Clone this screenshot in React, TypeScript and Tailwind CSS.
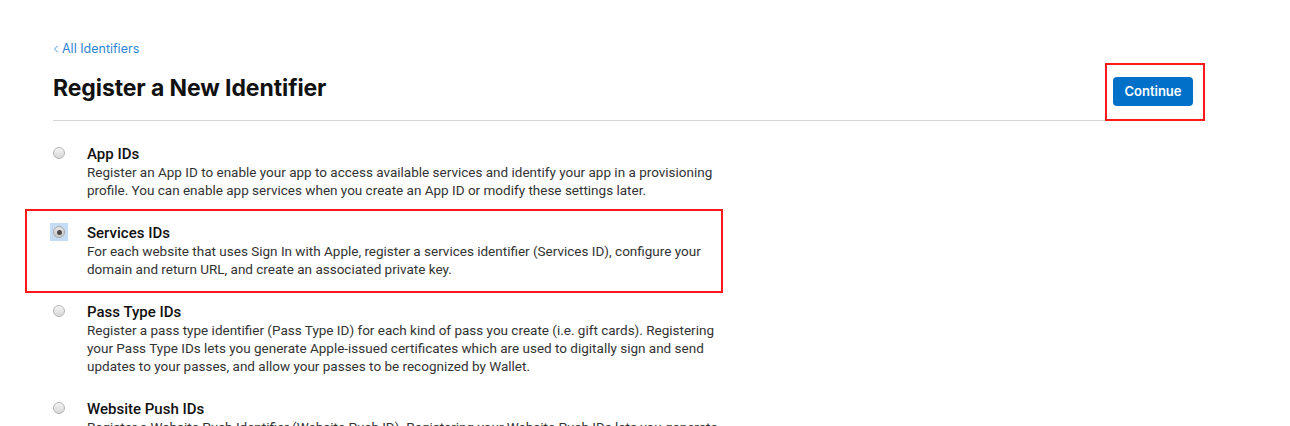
import { ChevronLeft } from 'lucide-react'

interface IdentifierType {
  title: string
  description: string
  selected?: boolean
}

const types: IdentifierType[] = [
  {
    title: 'App IDs',
    description:
      'Register an App ID to enable your app to access available services and identify your app in a provisioning profile. You can enable app services when you create an App ID or modify these settings later.',
  },
  {
    title: 'Services IDs',
    description:
      'For each website that uses Sign In with Apple, register a services identifier (Services ID), configure your domain and return URL, and create an associated private key.',
    selected: true,
  },
  {
    title: 'Pass Type IDs',
    description:
      'Register a pass type identifier (Pass Type ID) for each kind of pass you create (i.e. gift cards). Registering your Pass Type IDs lets you generate Apple-issued certificates which are used to digitally sign and send updates to your passes, and allow your passes to be recognized by Wallet.',
  },
  {
    title: 'Website Push IDs',
    description:
      'Register a Website Push Identifier (Website Push ID). Registering your Website Push IDs lets you generate Apple-issued certificates which are used to sign push notifications.',
  },
]

function Radio({ checked }: { checked?: boolean }) {
  if (checked) {
    return (
      <span className="flex h-[18px] w-[18px] items-center justify-center bg-[#c4dcf6]">
        <span className="flex h-[12px] w-[12px] items-center justify-center rounded-full border border-[#a9a9a9] bg-gradient-to-b from-[#e6e6e6] to-[#c9c9c9]">
          <span className="h-[5px] w-[5px] rounded-full bg-[#4a4a4a]" />
        </span>
      </span>
    )
  }
  return (
    <span className="flex h-[18px] w-[18px] items-center justify-center">
      <span className="h-[12px] w-[12px] rounded-full border border-[#b5b5b5] bg-gradient-to-b from-[#f4f4f4] to-[#d8d8d8]" />
    </span>
  )
}

export default function App() {
  return (
    <div className="h-[426px] w-[1290px] overflow-hidden bg-white font-['Inter',sans-serif]">
      <div className="ml-[53px] w-[1140px] pt-[41px]">
        {/* Back link */}
        <a className="flex items-center text-[12.5px] leading-[16px] text-[#2f86d7]">
          <ChevronLeft className="-ml-[3px] h-[12px] w-[12px]" strokeWidth={1.75} />
          All Identifiers
        </a>

        {/* Header */}
        <div className="mt-[13px] flex items-center justify-between border-b border-[#d6d6d6] pb-[14px]">
          <h1 className="text-[23px] font-bold leading-[36px] tracking-[-0.1px] text-[#111]">
            Register a New Identifier
          </h1>
          <div className="relative mt-[7px]">
            <button className="h-[29px] w-[80px] rounded-[4px] bg-[#0070c9] text-[13px] font-semibold text-white">
              Continue
            </button>
            <div className="pointer-events-none absolute -top-[14px] -bottom-[15px] -left-[8px] -right-[12px] border-2 border-[#ff1a1a]" />
          </div>
        </div>

        {/* Options */}
        <div className="mt-[23px] flex w-[671px] flex-col gap-[24px] font-['Roboto',sans-serif]">
          {types.map((t) => (
            <div key={t.title} className="relative flex gap-[19px]">
              <div className="-ml-[3px]">
                <Radio checked={t.selected} />
              </div>
              <div className="flex-1">
                <h3 className="text-[15px] font-medium leading-[20px] text-[#111]">{t.title}</h3>
                <p className="mt-[-1px] text-[13.5px] leading-[18px] text-[#333]">{t.description}</p>
              </div>
              {t.selected && (
                <div className="pointer-events-none absolute -top-[14px] -bottom-[15px] -left-[28px] right-[1px] border-2 border-[#ff1a1a]" />
              )}
            </div>
          ))}
        </div>
      </div>
    </div>
  )
}
